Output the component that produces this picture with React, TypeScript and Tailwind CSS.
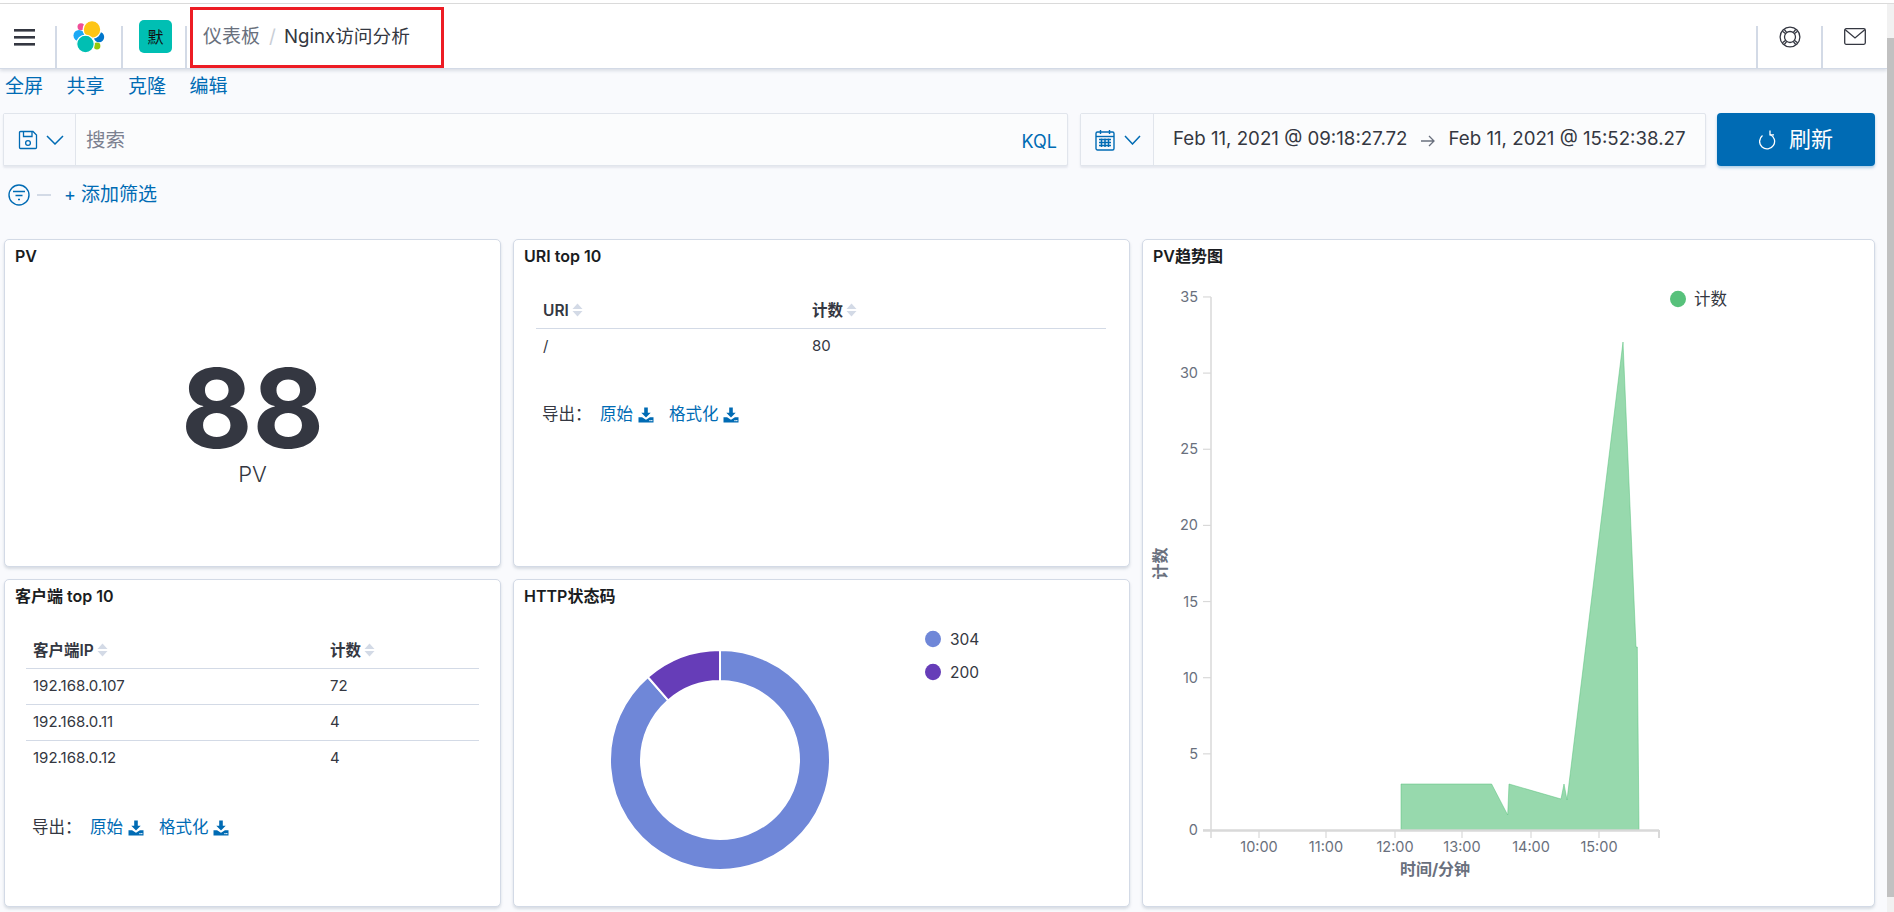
import React from 'react';

const SortIcon = () => (
  <svg width="11" height="14" viewBox="0 0 11 14" className="ml-[3px] shrink-0">
    <path d="M5.500 0.500L10.500 6H0.500Z" fill="#d3dae6" />
    <path d="M5.500 13.500L10.500 8H0.500Z" fill="#d3dae6" />
  </svg>
);

const DownloadIcon = () => (
  <svg width="16" height="16" viewBox="0 0 16 16" className="shrink-0">
    <path d="M6.200 0.500h3.600v5.200h2.900L8 10.400 3.300 5.700h2.900z" fill="#006bb4" />
    <path d="M0.500 10.200h3.600l3.900 2.600 3.900-2.600h3.600v5.300H0.500z" fill="#006bb4" />
    <rect x="11.400" y="13" width="1.200" height="1.200" fill="#fff" />
    <rect x="13.200" y="13" width="1.200" height="1.200" fill="#fff" />
  </svg>
);

const Panel: React.FC<{ title: string; children?: React.ReactNode }> = ({ title, children }) => (
  <div className="bg-white border border-[#d3dae6] rounded-[5px] shadow-[0_2px_3px_rgba(152,162,179,0.35)] overflow-hidden">
    <div className="px-[10px] pt-[6px] h-[26px] text-[16px] leading-[20px] font-semibold text-[#1a1c21]">{title}</div>
    {children}
  </div>
);

const ExportLinks = () => (
  <div className="flex items-center h-[20px] text-[16.500px] ml-[6px] pt-[1px]">
    <span className="text-[#343741] w-[58px]">导出：</span>
    <a className="text-[#006bb4] mr-[5px]">原始</a>
    <DownloadIcon />
    <a className="text-[#006bb4] ml-[15px] mr-[4px]">格式化</a>
    <DownloadIcon />
  </div>
);

const DataTable: React.FC<{ head: string[]; rows: string[][]; firstCol: number; width: number }> = ({ head, rows, firstCol, width }) => (
  <table className="table-fixed border-collapse text-[15px] text-[#343741]" style={{ width }}>
    <colgroup>
      <col style={{ width: firstCol }} />
      <col />
    </colgroup>
    <thead>
      <tr className="h-[36px] border-b border-[#d3dae6]">
        {head.map(h => (
          <th key={h} className="pl-[7px] pt-[1px] text-left text-[15.500px] font-semibold">
            <span className="inline-flex items-center">
              {h}
              <SortIcon />
            </span>
          </th>
        ))}
      </tr>
    </thead>
    <tbody>
      {rows.map((r, i) => (
        <tr key={r[0]} className={i < rows.length - 1 ? 'h-[36px] border-b border-[#d3dae6]' : 'h-[36px]'}>
          {r.map(c => (
            <td key={c} className="pl-[7px] font-normal">{c}</td>
          ))}
        </tr>
      ))}
    </tbody>
  </table>
);

function arc(cx: number, cy: number, ro: number, ri: number, a0: number, a1: number) {
  const pt = (r: number, a: number) => {
    const t = (a * Math.PI) / 180;
    return `${(cx + r * Math.sin(t)).toFixed(2)} ${(cy - r * Math.cos(t)).toFixed(2)}`;
  };
  const large = a1 - a0 > 180 ? 1 : 0;
  return `M${pt(ro, a0)}A${ro} ${ro} 0 ${large} 1 ${pt(ro, a1)}L${pt(ri, a1)}A${ri} ${ri} 0 ${large} 0 ${pt(ri, a0)}Z`;
}

const DonutChart = () => (
  <svg width="615" height="300" viewBox="514 606 615 300" className="block">
    <path d={arc(720, 760, 110, 79, 0, 319)} fill="#6f87d8" stroke="#fff" strokeWidth="2" />
    <path d={arc(720, 760, 110, 79, 319, 360)} fill="#663db8" stroke="#fff" strokeWidth="2" />
    <ellipse cx="933" cy="639" rx="8" ry="8.300" fill="#6f87d8" />
    <text x="950" y="644.500" fontSize="15.500" fill="#343741">304</text>
    <ellipse cx="933" cy="672" rx="8" ry="8.300" fill="#663db8" />
    <text x="950" y="677.500" fontSize="15.500" fill="#343741">200</text>
  </svg>
);

const yTicks = [35, 30, 25, 20, 15, 10, 5, 0];
const xTicks = [
  { x: 1259, l: '10:00' },
  { x: 1326, l: '11:00' },
  { x: 1395, l: '12:00' },
  { x: 1462, l: '13:00' },
  { x: 1531, l: '14:00' },
  { x: 1599, l: '15:00' },
];
const areaPoints = '1401,830 1401,784 1491.6,784 1507.7,815 1509,784 1561,799 1564,784 1567,800 1623,342 1636,647 1637.3,647 1639,830';

const AreaChart = () => (
  <svg width="731" height="640" viewBox="1143 266 731 640" className="block">
    <polygon points={areaPoints} fill="#57c17b" fillOpacity="0.62" stroke="#57c17b" strokeOpacity="0.5" strokeWidth="1" />
    <path d="M1211 297V838" stroke="#d9d9d9" strokeWidth="1.500" fill="none" />
    <path d="M1203 830.500H1659" stroke="#d9d9d9" strokeWidth="2.500" fill="none" />
    <path d="M1659 830V838" stroke="#d9d9d9" strokeWidth="2" fill="none" />
    {yTicks.map(v => {
      const y = 830 - v * 15.23;
      return (
        <g key={v}>
          <path d={`M1203 ${y}H1211`} stroke="#d9d9d9" strokeWidth="1.200" />
          <text x="1198" y={y + 5} textAnchor="end" fontSize="14.500" fill="#69707d">{v}</text>
        </g>
      );
    })}
    {xTicks.map(t => (
      <g key={t.l}>
        <path d={`M${t.x} 830V838`} stroke="#d9d9d9" strokeWidth="1.200" />
        <text x={t.x} y="852" textAnchor="middle" fontSize="14.500" fill="#69707d">{t.l}</text>
      </g>
    ))}
    <text x="1435" y="875" textAnchor="middle" fontSize="16" fontWeight="700" fill="#69707d">时间/分钟</text>
    <text x="1160" y="563.500" textAnchor="middle" fontSize="16" fontWeight="700" fill="#69707d" transform="rotate(-90 1160 563.500)" dominantBaseline="central">计数</text>
    <ellipse cx="1678" cy="299" rx="8" ry="8.300" fill="#57c17b" />
    <text x="1694" y="305" fontSize="16.500" fill="#343741">计数</text>
  </svg>
);

const HeaderCell: React.FC<{ className: string; children?: React.ReactNode }> = ({ className, children }) => (
  <div className={`h-[42px] border-r-2 border-[#d3dae6] shrink-0 flex justify-center ${className}`}>{children}</div>
);

export default function App() {
  return (
    <div className="w-full h-[912px] overflow-hidden flex flex-col bg-white font-['Inter','Noto_Sans_CJK_SC',sans-serif]">
      <div className="h-[3px] shrink-0" />
      <div className="h-px bg-[#dcdcdc] shrink-0" />
      <div className="flex flex-1 min-h-0">
        <div className="flex-1 min-w-0 bg-[#f9fafd]">
          {/* top bar */}
          <div className="h-[65px] bg-white flex items-end border-b border-[#d3dae6] shadow-[0_2px_3px_rgba(152,162,179,0.3)]">
            <HeaderCell className="w-[57px]">
              <svg width="21" height="17" viewBox="0 0 21 17" className="mt-[3px] mr-[6px]">
                <rect x="0" y="0" width="21" height="2.600" fill="#343741" />
                <rect x="0" y="7" width="21" height="2.600" fill="#343741" />
                <rect x="0" y="14" width="21" height="2.600" fill="#343741" />
              </svg>
            </HeaderCell>
            <HeaderCell className="w-[66px]">
              <svg width="32" height="33" viewBox="0 0 32 33" className="-mt-[6px]">
                <ellipse cx="8" cy="6.800" rx="3.500" ry="3.500" fill="#f04e98" />
                <circle cx="6" cy="15.500" r="5.500" fill="#1ba9f5" />
                <circle cx="26" cy="17" r="5.200" fill="#0077cc" />
                <circle cx="24" cy="26" r="3.400" fill="#93c90e" />
                <circle cx="19" cy="9.500" r="8.800" fill="#fec514" stroke="#fff" strokeWidth="1.200" />
                <circle cx="12.500" cy="24" r="8.800" fill="#00bfb3" stroke="#fff" strokeWidth="1.200" />
              </svg>
            </HeaderCell>
            <HeaderCell className="w-[64px]">
              <div className="w-[33px] h-[33px] -mt-[6px] ml-[3px] rounded-[5px] bg-[#00bfb3] flex items-center justify-center text-[16px] text-[#111]">默</div>
            </HeaderCell>
            <div className="ml-[3px] w-[254px] h-[61px] border-[3px] border-[#ed1c24] flex items-start pt-[14px] pl-[10px] text-[19px] leading-[26px] whitespace-nowrap">
              <span className="text-[#69707d]">仪表板</span>
              <span className="text-[#c9ced6] ml-[9px] mr-[8px]">/</span>
              <span className="text-[#343741] text-[18.700px]">Nginx访问分析</span>
            </div>
            <div className="flex-1" />
            <div className="h-[42px] border-l-2 border-r-2 border-[#d3dae6] w-[67px] flex justify-center shrink-0">
              <svg width="22" height="22" viewBox="0 0 24 24" fill="none" stroke="#343741" strokeWidth="1.400">
                <circle cx="12" cy="12" r="10.800" />
                <circle cx="12" cy="12" r="6" />
                <path d="M3.800 5.800L7.300 8.500M5.800 3.800L8.500 7.300M20.200 5.800L16.700 8.500M18.200 3.800L15.500 7.300M3.800 18.200L7.300 15.500M5.800 20.200L8.500 16.700M20.200 18.200L16.700 15.500M18.200 20.200L15.500 16.700" />
              </svg>
            </div>
            <div className="h-[42px] w-[64px] flex justify-center shrink-0">
              <svg width="22" height="17" viewBox="0 0 22 17" fill="none" stroke="#343741" strokeWidth="1.300" className="mt-[2px]">
                <rect x="0.700" y="0.700" width="20.600" height="15.600" rx="1.500" />
                <path d="M1 1.500L11 10L21 1.500" />
              </svg>
            </div>
          </div>

          {/* dashboard actions */}
          <div className="h-[34px] flex items-center gap-[23.500px] pl-[5px] pt-[2px] text-[19px] text-[#006bb4]">
            <a>全屏</a>
            <a>共享</a>
            <a>克隆</a>
            <a>编辑</a>
          </div>

          {/* query bar */}
          <div className="mt-[10px] flex pl-[3px] h-[53px]">
            <div className="w-[1065px] bg-[#fbfcfd] border border-[#e1e5ec] rounded-[2px] shadow-[0_2px_2px_rgba(152,162,179,0.2)] flex items-center">
              <div className="w-[72px] h-full border-r border-[#e1e5ec] bg-[#f9fafd] flex items-center pl-[14px] shrink-0">
                <svg width="20" height="20" viewBox="0 0 20 20" fill="none" stroke="#006bb4" strokeWidth="1.300">
                  <path d="M1.500 2.500a1 1 0 0 1 1-1h12.500l3.500 3.500v12.500a1 1 0 0 1-1 1h-15a1 1 0 0 1-1-1z" />
                  <path d="M5.500 1.500v5h8.500v-5" />
                  <circle cx="10" cy="13" r="2.400" />
                </svg>
                <svg width="18" height="10" viewBox="0 0 18 10" fill="none" stroke="#006bb4" strokeWidth="1.500" className="ml-[8px]">
                  <path d="M1 1L9 9L17 1" />
                </svg>
              </div>
              <span className="ml-[10px] pt-[3px] text-[19.500px] text-[#7b8190]">搜索</span>
              <span className="ml-auto mr-[10px] pt-[3px] text-[18px] text-[#006bb4]">KQL</span>
            </div>
            <div className="ml-[12px] w-[626px] bg-[#fbfcfd] border border-[#e1e5ec] rounded-[2px] shadow-[0_2px_2px_rgba(152,162,179,0.2)] flex items-center">
              <div className="w-[73px] h-full border-r border-[#e1e5ec] bg-[#f9fafd] flex items-center pl-[14px] shrink-0">
                <svg width="20" height="22" viewBox="0 0 20 22" fill="none" className="shrink-0">
                  <rect x="1" y="3" width="18" height="18" rx="1.500" stroke="#006bb4" strokeWidth="1.400" />
                  <path d="M1 7.500h18" stroke="#006bb4" strokeWidth="1.400" />
                  <path d="M5.500 1v4M14.500 1v4" stroke="#006bb4" strokeWidth="1.400" />
                  <path d="M4 10.500h12M4 13.500h12M4 16.500h12M6.500 9.500v8.500M10 9.500v8.500M13.500 9.500v8.500" stroke="#006bb4" strokeWidth="1.500" />
                </svg>
                <svg width="17" height="10" viewBox="0 0 17 10" fill="none" stroke="#006bb4" strokeWidth="1.500" className="ml-[9px]">
                  <path d="M1 1L8.500 9L16 1" />
                </svg>
              </div>
              <span className="ml-[19px] text-[18.700px] text-[#343741] whitespace-nowrap">Feb 11, 2021 @ 09:18:27.72</span>
              <svg width="14" height="12" viewBox="0 0 14 12" fill="none" stroke="#69707d" strokeWidth="1.300" className="ml-[13px] mt-[3px] shrink-0">
                <path d="M0 6H13M8 1L13 6L8 11" />
              </svg>
              <span className="ml-[14px] text-[18.700px] text-[#343741] whitespace-nowrap">Feb 11, 2021 @ 15:52:38.27</span>
            </div>
            <button className="ml-[11px] w-[158px] bg-[#006bb4] rounded-[4px] shadow-[0_2px_3px_rgba(0,107,180,0.3)] flex items-center justify-center text-white text-[22px]">
              <svg width="17" height="20" viewBox="0 0 17 20" fill="none" stroke="#fff" strokeWidth="1.300" className="mr-[13px]">
                <path d="M11 4.500A7.500 7.500 0 1 1 3.500 5.500" />
                <path d="M11 0.500V4.800H15" />
              </svg>
              刷新
            </button>
          </div>

          {/* filter row */}
          <div className="mt-[18px] h-[22px] flex items-center pl-[8px]">
            <svg width="22" height="22" viewBox="0 0 22 22" fill="none" stroke="#006bb4" strokeWidth="1.400" className="shrink-0">
              <circle cx="11" cy="11" r="10" />
              <path d="M5 7.500H17M7.500 11.500H14.500M10 15.500H12" />
            </svg>
            <div className="ml-[7px] w-[14px] h-[2px] bg-[#d3dae6]" />
            <span className="ml-[13px] text-[19px] text-[#006bb4] whitespace-nowrap"><span className="text-[18px] mr-[5px]">+</span>添加筛选</span>
          </div>

          {/* panels */}
          <div className="mt-[33px] pl-[4px] grid grid-cols-[497px_617px_733px] grid-rows-[328px_328px] gap-3">
            <Panel title="PV">
              <div className="flex flex-col items-center pt-[90px]">
                <div className="text-[110px] leading-[104px] font-bold text-[#343741]">88</div>
                <div className="text-[22px] leading-[28px] font-light text-[#343741]">PV</div>
              </div>
            </Panel>
            <Panel title="URI top 10">
              <div className="ml-[22px] mt-[26px]">
                <DataTable head={['URI', '计数']} rows={[['/', '80']]} firstCol={269} width={570} />
                <div className="mt-[40px]"><ExportLinks /></div>
              </div>
            </Panel>
            <div className="row-span-2 grid">
              <Panel title="PV趋势图">
                <AreaChart />
              </Panel>
            </div>
            <Panel title="客户端 top 10">
              <div className="ml-[21px] mt-[26px]">
                <DataTable
                  head={['客户端IP', '计数']}
                  rows={[
                    ['192.168.0.107', '72'],
                    ['192.168.0.11', '4'],
                    ['192.168.0.12', '4 '],
                  ]}
                  firstCol={297}
                  width={453}
                />
                <div className="mt-[41px]"><ExportLinks /></div>
              </div>
            </Panel>
            <Panel title="HTTP状态码">
              <DonutChart />
            </Panel>
          </div>
        </div>

        {/* scrollbar */}
        <div className="w-[7px] shrink-0 bg-[#f1f1f1] pt-[34px] pb-[15px] flex">
          <div className="flex-1 bg-[#c1c1c1]" />
        </div>
      </div>
    </div>
  );
}
